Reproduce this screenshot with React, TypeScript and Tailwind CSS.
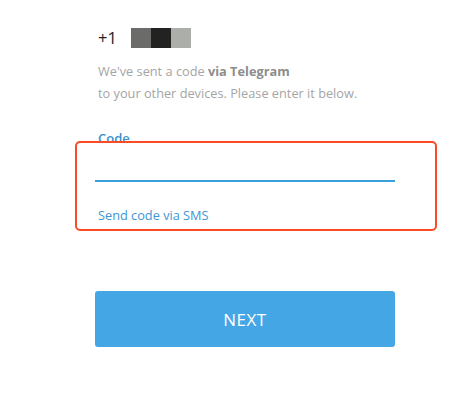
export default function App() {
  return (
    <div
      className="relative w-[460px] h-[415px] bg-white overflow-hidden"
      style={{ fontFamily: '"Open Sans", "Noto Sans", sans-serif' }}
    >
      <div className="pl-[95px] pt-[28px] w-[395px]">
        <div className="flex items-center h-[20px]">
          <span className="ml-[3px] text-[16.5px] leading-none text-[#222]">+1</span>
          <div className="ml-[14px] flex h-[20px]">
            <div className="w-[20px] bg-[#6b6b6a]" />
            <div className="w-[20px] bg-[#222222]" />
            <div className="w-[20px] bg-[#abaea9]" />
          </div>
        </div>

        <p className="ml-[3px] mt-[12px] text-[12.75px] leading-[22px] text-[#a5a5a5]">
          We've sent a code <span className="font-bold text-[#8d8d8d]">via Telegram</span>
          <br />
          to your other devices. Please enter it below.
        </p>

        <div className="mt-[25px]">
          <label className="ml-[3px] block text-[13px] leading-[18px] font-semibold text-[#3a8fcb]">Code</label>
          <input
            className="block w-[300px] h-[35px] border-b-2 border-[#3aa0dc] outline-none text-[15px] px-[3px]"
            type="text"
          />
          <a className="ml-[3px] mt-[24px] block text-[12.75px] leading-[18px] text-[#3d96d3]">Send code via SMS</a>
        </div>

        <button className="mt-[67px] w-[300px] h-[56px] rounded-[3px] bg-[#45a6e6] text-white text-[17px] tracking-[0.5px] pt-[2px]">
          NEXT
        </button>
      </div>

      <div className="absolute left-[75px] top-[141px] w-[362px] h-[90px] border-[2.5px] border-[#fb4a26] rounded-[5px] pointer-events-none" />
    </div>
  );
}
